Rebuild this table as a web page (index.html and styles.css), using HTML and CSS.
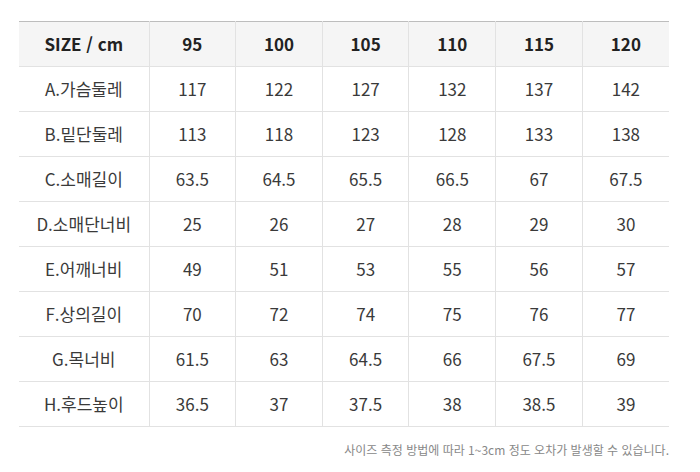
FILE: index.html
```html
<!DOCTYPE html>
<html lang="ko">
<head>
<meta charset="utf-8">
<link rel="stylesheet" href="styles.css">
</head>
<body>
<div class="wrap">
<table class="size-table">
<colgroup><col class="c-label"><col><col><col><col><col><col></colgroup>
<thead>
<tr><th>SIZE / cm</th><th>95</th><th>100</th><th>105</th><th>110</th><th>115</th><th>120</th></tr>
</thead>
<tbody>
<tr><td>A.가슴둘레</td><td>117</td><td>122</td><td>127</td><td>132</td><td>137</td><td>142</td></tr>
<tr><td>B.밑단둘레</td><td>113</td><td>118</td><td>123</td><td>128</td><td>133</td><td>138</td></tr>
<tr><td>C.소매길이</td><td>63.5</td><td>64.5</td><td>65.5</td><td>66.5</td><td>67</td><td>67.5</td></tr>
<tr><td>D.소매단너비</td><td>25</td><td>26</td><td>27</td><td>28</td><td>29</td><td>30</td></tr>
<tr><td>E.어깨너비</td><td>49</td><td>51</td><td>53</td><td>55</td><td>56</td><td>57</td></tr>
<tr><td>F.상의길이</td><td>70</td><td>72</td><td>74</td><td>75</td><td>76</td><td>77</td></tr>
<tr><td>G.목너비</td><td>61.5</td><td>63</td><td>64.5</td><td>66</td><td>67.5</td><td>69</td></tr>
<tr><td>H.후드높이</td><td>36.5</td><td>37</td><td>37.5</td><td>38</td><td>38.5</td><td>39</td></tr>
</tbody>
</table>
<p class="note">사이즈 측정 방법에 따라 1~3cm 정도 오차가 발생할 수 있습니다.</p>
</div>
</body>
</html>
```
FILE: styles.css
```css
html, body {
  margin: 0;
  padding: 0;
  background: #fff;
}
body {
  font-family: "Noto Sans CJK KR", "Noto Sans", sans-serif;
  color: #333;
}
.wrap {
  width: 650px;
  padding: 21px 0 0 19px;
}
.size-table {
  width: 650px;
  border-collapse: collapse;
  table-layout: fixed;
  border-top: 1px solid #bdbdbd;
}
.c-label {
  width: 130px;
}
.size-table th,
.size-table td {
  height: 44px;
  padding: 0;
  text-align: center;
  vertical-align: middle;
  border-bottom: 1px solid #e2e2e2;
  border-left: 1px solid #e2e2e2;
  font-size: 17px;
  line-height: 20px;
}
.size-table th:first-child,
.size-table td:first-child {
  border-left: none;
}
.size-table th {
  background: #f5f5f5;
  font-weight: 700;
  color: #222;
}
.size-table td {
  font-weight: 400;
  color: #3a3a3a;
}
.note {
  margin: 15px 0 0;
  text-align: right;
  font-size: 12px;
  line-height: 16px;
  color: #888;
}
```
